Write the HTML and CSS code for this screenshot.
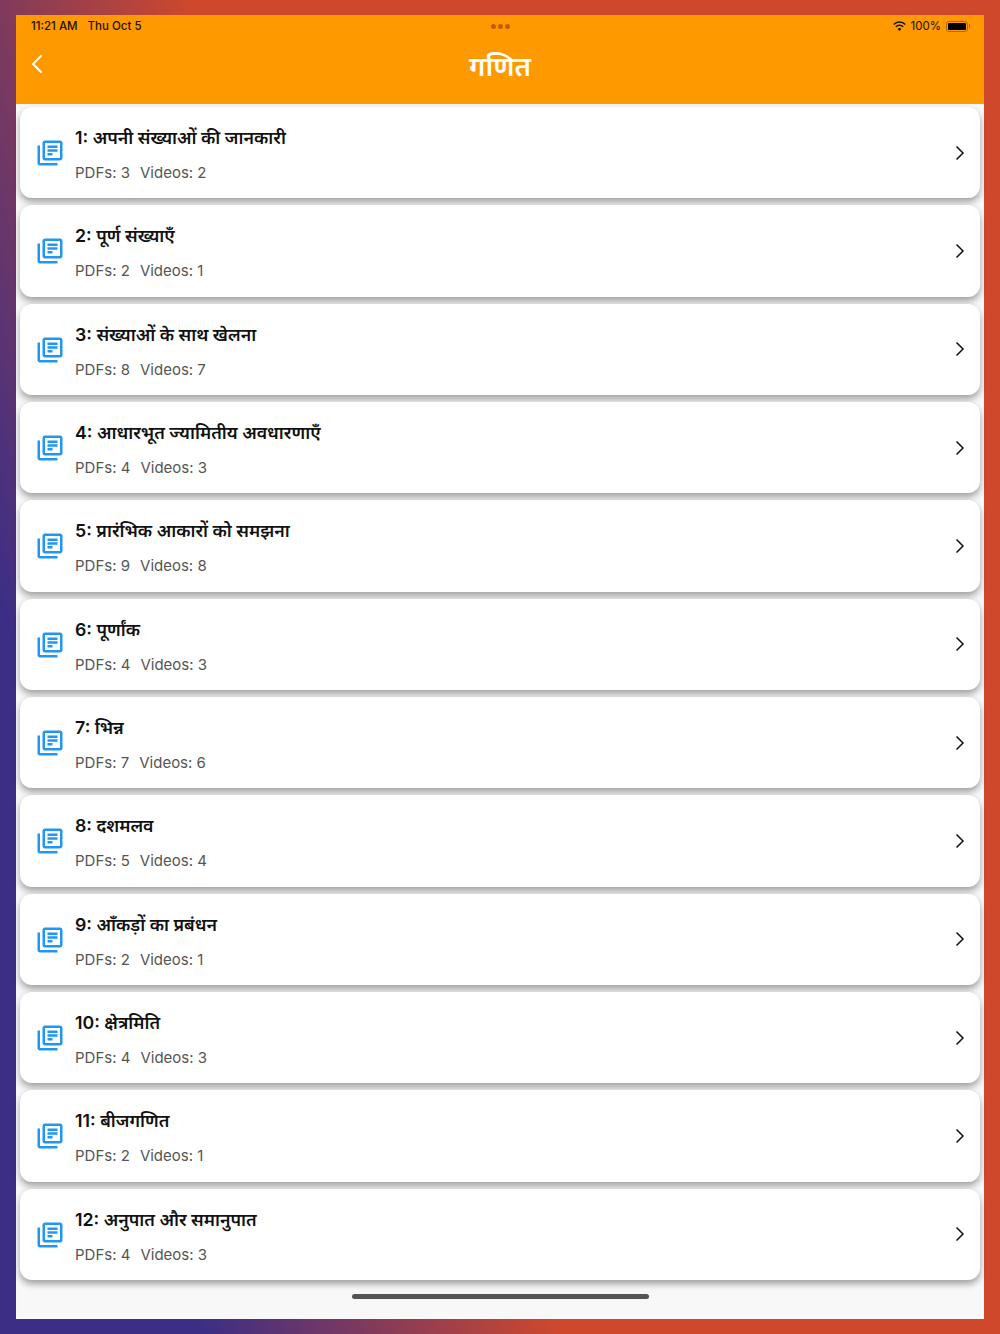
FILE: index.html
```html
<!DOCTYPE html>
<html lang="hi">
<head>
  <meta charset="UTF-8" />
  <title>गणित</title>
  <link rel="stylesheet" href="styles.css">
</head>
<body>
  <div class="screen">
    <header class="app-header">
      <div class="status-bar">
        <div class="status-left"><span>11:21 AM</span><span>Thu Oct 5</span></div>
        <div class="status-dots"><i></i><i></i><i></i></div>
        <div class="status-right">
          <svg class="wifi" viewBox="0 0 13 10">
            <path class="wifi-arc" d="M.7 3.500A8 8 0 0 1 12.300 3.500"/>
            <path class="wifi-arc" d="M2.800 5.700A5.200 5.200 0 0 1 10.200 5.700"/>
            <path class="wifi-dot" d="M6.500 9.900 4.700 7.900A2.600 2.600 0 0 1 8.300 7.900z"/>
          </svg>
          <span>100%</span>
          <span class="battery"><span class="battery-fill"></span></span>
          <span class="battery-cap"></span>
        </div>
      </div>
      <div class="title-bar">
        <svg class="back" viewBox="0 0 12 20"><path d="M10.500 1.500 2 10l8.500 8.500"/></svg>
        <h1>गणित</h1>
      </div>
    </header>

    <ul class="chapter-list" id="chapters"></ul>
    <div class="home-indicator"></div>
  </div>

  <template id="chapterRow">
    <li class="chapter">
      <svg class="chapter-icon" viewBox="0 0 24 24"><path d="M4 6H2v14c0 1.100.9 2 2 2h14v-2H4V6zm16-4H8c-1.100 0-2 .9-2 2v12c0 1.100.9 2 2 2h12c1.100 0 2-.9 2-2V4c0-1.100-.9-2-2-2zm0 14H8V4h12v12zM10 9h8v2h-8zm0 3h4v2h-4zm0-6h8v2h-8z"/></svg>
      <div class="chapter-text">
        <div class="chapter-title"></div>
        <div class="chapter-meta"><span class="pdfs"></span><span class="videos"></span></div>
      </div>
      <svg class="chevron" viewBox="0 0 10 16"><path d="M1.500 1.500 8 8l-6.500 6.500"/></svg>
    </li>
  </template>

<script>
const chapters = [
  ['1: अपनी संख्याओं की जानकारी', 3, 2],
  ['2: पूर्ण संख्याएँ', 2, 1],
  ['3: संख्याओं के साथ खेलना', 8, 7],
  ['4: आधारभूत ज्यामितीय अवधारणाएँ', 4, 3],
  ['5: प्रारंभिक आकारों को समझना', 9, 8],
  ['6: पूर्णांक', 4, 3],
  ['7: भिन्न', 7, 6],
  ['8: दशमलव', 5, 4],
  ['9: आँकड़ों का प्रबंधन', 2, 1],
  ['10: क्षेत्रमिति', 4, 3],
  ['11: बीजगणित', 2, 1],
  ['12: अनुपात और समानुपात', 4, 3]
];

const list = document.getElementById('chapters');
const rowTemplate = document.getElementById('chapterRow');

chapters.forEach(([title, pdfs, videos]) => {
  const row = rowTemplate.content.cloneNode(true);
  row.querySelector('.chapter-title').textContent = title;
  row.querySelector('.pdfs').textContent = `PDFs: ${pdfs}`;
  row.querySelector('.videos').textContent = `Videos: ${videos}`;
  list.appendChild(row);
});
</script>
</body>
</html>
```

FILE: styles.css
```css
*, *::before, *::after {
  box-sizing: border-box;
}

html, body {
  margin: 0;
  padding: 0;
}

body {
  height: 1334px;
  padding: 15px 16px;
  overflow: hidden;
  background: linear-gradient(74.500deg, #3d2e85 15%, #cf482c 41%);
  font-family: Inter, "Noto Sans", "Noto Sans Devanagari", sans-serif;
}

.screen {
  position: relative;
  height: 1304px;
  background-color: #f8f8f9;
}

.app-header {
  height: 89px;
  background-color: #ff9900;
}

.status-bar {
  position: relative;
  display: flex;
  justify-content: space-between;
  align-items: center;
  height: 22px;
  padding: 0 14px 0 15px;
  font-size: 11.500px;
  font-weight: 500;
  color: #1a1206;
}

.status-left {
  display: flex;
  gap: 10px;
}

.status-dots {
  position: absolute;
  left: 475px;
  top: 9px;
  display: flex;
  gap: 2px;
}

.status-dots i {
  width: 5px;
  height: 5px;
  border-radius: 50%;
  background-color: #c65a0c;
}

.status-right {
  display: flex;
  align-items: center;
  font-weight: 400;
}

.wifi {
  width: 13px;
  height: 10px;
  margin-right: 5px;
}

.wifi-arc {
  fill: none;
  stroke: #111;
  stroke-width: 1.500;
}

.wifi-dot {
  fill: #111;
}

.battery {
  width: 22px;
  height: 11px;
  margin-left: 5px;
  padding: 1px;
  border: 1px solid #a56a10;
  border-radius: 3px;
}

.battery-fill {
  display: block;
  height: 100%;
  border-radius: 1px;
  background-color: #000;
}

.battery-cap {
  width: 1px;
  height: 4px;
  margin-left: 1px;
  background-color: #a56a10;
}

.title-bar {
  position: relative;
  display: flex;
  justify-content: center;
  height: 67px;
}

.title-bar h1 {
  margin: 6px 0 0;
  font-size: 27.500px;
  line-height: 46px;
  font-weight: 600;
  color: #fff;
}

.back {
  position: absolute;
  left: 15px;
  top: 17px;
  width: 12px;
  height: 20px;
  fill: none;
  stroke: #fff;
  stroke-width: 2;
}

.chapter-list {
  display: flex;
  flex-direction: column;
  gap: 7px;
  margin: 0;
  padding: 3px 4px 0;
  list-style: none;
}

.chapter {
  display: flex;
  align-items: center;
  height: 91.330px;
  padding-left: 15px;
  padding-right: 15px;
  border-radius: 12px;
  background-color: #fff;
  box-shadow: 0 4px 7px rgba(0, 0, 0, 0.36);
}

.chapter-icon {
  flex: none;
  width: 30px;
  height: 30px;
  margin-top: 1px;
  fill: #2196f3;
}

.chapter-text {
  flex: 1;
  margin-left: 10px;
  padding-top: 2px;
}

.chapter-title {
  font-size: 17.750px;
  line-height: 28px;
  font-weight: 600;
  color: #111;
}

.chapter-meta {
  display: flex;
  gap: 10px;
  margin-top: 11px;
  font-size: 15px;
  line-height: 20px;
  color: #555;
}

.chevron {
  flex: none;
  width: 10px;
  height: 16px;
  fill: none;
  stroke: #111;
  stroke-width: 1.500;
}

.home-indicator {
  position: absolute;
  left: 336px;
  bottom: 20px;
  width: 297px;
  height: 5px;
  border-radius: 3px;
  background-color: #555;
}
```
